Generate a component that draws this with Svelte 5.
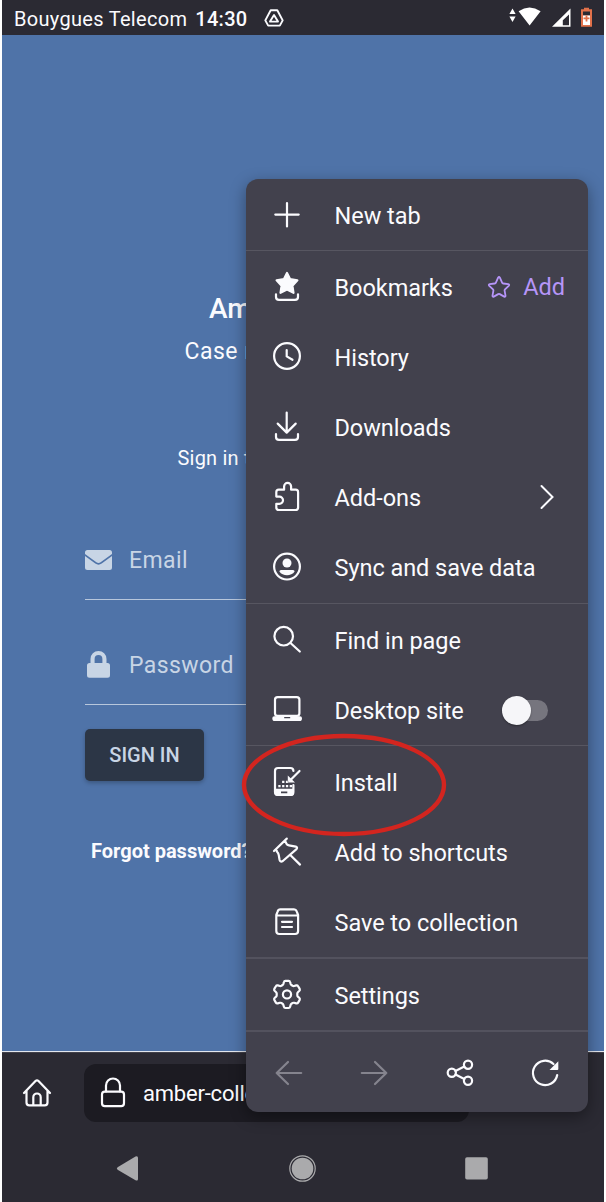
<script>
  const groups = [
    [{ id: 'plus', label: 'New tab' }],
    [
      { id: 'bookmarks', label: 'Bookmarks' },
      { id: 'history', label: 'History' },
      { id: 'downloads', label: 'Downloads' },
      { id: 'addons', label: 'Add-ons' },
      { id: 'sync', label: 'Sync and save data' }
    ],
    [
      { id: 'find', label: 'Find in page' },
      { id: 'desktop', label: 'Desktop site' }
    ],
    [
      { id: 'install', label: 'Install' },
      { id: 'pin', label: 'Add to shortcuts' },
      { id: 'collection', label: 'Save to collection' }
    ],
    [{ id: 'settings', label: 'Settings' }]
  ];
</script>

{#snippet icon(id)}
  <svg class="icon" viewBox="-18 -18 36 36">
    {#if id === 'plus'}
      <path d="M0-12V11.4M-11.7-.4H11.7" />
    {:else if id === 'bookmarks'}
      <path class="solid" d="M0-14L3-7.9L10.4-6.7L5.4-1.3L6.5 5.8L0 2.6L-6.5 5.8L-5.4-1.3L-10.4-6.7L-3-7.9Z" />
      <path d="M-11 7.3V10Q-11 12.9-8 12.9H8Q11 12.9 11 10V7.3" />
    {:else if id === 'history'}
      <circle cx="0" cy="-1" r="12.9" />
      <path d="M-.3-7V-.6L5.5 2.8" />
    {:else if id === 'downloads'}
      <path d="M-.3-14.5V5.4M-9.3-3.4L-.3 5.6L8.7-3.4M-11 7V10Q-11 12.8-8 12.8H8Q11 12.8 11 10V7" />
    {:else if id === 'addons'}
      <path d="M-10.7-1V-4.8Q-10.7-7.3-8.2-7.3H-2.9V-10.6A3.5 3.5 0 0 1 4.1-10.6V-7.3H8.6Q11.1-7.3 11.1-4.8V10.5Q11.1 13 8.6 13H-8.2Q-10.7 13-10.7 10.5V6.8H-7.6A3.4 3.4 0 0 0-7.6-.4H-10.7Z" />
    {:else if id === 'sync'}
      <circle cx="0" cy="-.4" r="12.9" />
      <circle class="fill" cx="0" cy="-4" r="4.5" />
      <path class="fill" d="M-7.6 4.4Q-7.6 2.9-6 2.9H6Q7.6 2.9 7.6 4.4C6 6.9 3 8.2 0 8.2S-6 6.9-7.6 4.4Z" />
    {:else if id === 'find'}
      <circle cx="-3.3" cy="-3.8" r="9.3" />
      <path d="M3.5 3L12.8 11.5" />
    {:else if id === 'desktop'}
      <rect x="-12" y="-12.8" width="24.4" height="18.7" rx="2.6" />
      <path class="fill" fill-rule="evenodd" d="M-14.7 8.2Q-14.7 6.2-12.7 6.2H13Q15 6.2 15 8.2Q15 11.1 12.5 11.1H-12.2Q-14.7 11.1-14.7 8.2ZM-2.8 7V8.3H3.2V7Z" />
    {:else if id === 'install'}
      <path d="M6.4-11Q6.4-14 3.4-14H-9Q-12-14-12-11V10Q-12 13-9 13H3.4Q6.4 13 6.4 10V3" />
      <path class="fill" fill-rule="evenodd" d="M-12.5 6.8H7V11Q7 14 4 14H-9.5Q-12.5 14-12.5 11ZM-6 9.5V11.2H.3V9.5Z" />
      <path class="fill" d="M-8.7 2.9h2.3v2.3h-2.3zM-4.9 2.9h2.3v2.3h-2.3zM-1.1 2.9h2.3v2.3h-2.3zM2.7 2.9h2.3v2.3h-2.3zM-4.9-1.2h2.3v2.3h-2.3zM-1.1-1.2h2.3v2.3h-2.3zM.8-6.5V.6H8Z" />
      <path d="M12.5-11L3.5-2" />
    {:else if id === 'pin'}
      <path d="M-.2-13.4L-13-1M-2.2-11.4L-.6-8.4Q.2-7 1.9-6.7L8.8-5.4Q10.9-4.7 9.5-2.9L-4.2 9Q-6.6 10.5-7.4 8L-8.3 2.9Q-8.6 1.2-9.9-.2L-11-2.8M3.5 3.2L13 12.6" />
    {:else if id === 'collection'}
      <path d="M-10.7-7L-9.3-10.6Q-8.7-12.6-6.7-12.6H7Q9-12.6 9.7-10.6L11.1-7V9Q11.1 12 8.1 12H-7.7Q-10.7 12-10.7 9ZM-10.7-6.5H11.1M-5-.2H5M-5 5H5" />
    {:else if id === 'settings'}
      <g transform="translate(0 -.6)">
        <circle r="4.1" />
        <path d="M-1.6-13.6H1.6Q2.8-13.6 3.1-12.4L3.7-10.3Q4-9.5 4.8-9.1L5.6-8.6Q6.3-8.2 7.1-8.4L9.2-9Q10.5-9.3 11.1-8.2L12.7-5.5Q13.2-4.4 12.4-3.6L10.9-2.2Q10.3-1.6 10.3-.8V.8Q10.3 1.6 10.9 2.2L12.4 3.6Q13.2 4.4 12.7 5.5L11.1 8.2Q10.5 9.3 9.2 9L7.1 8.4Q6.3 8.2 5.6 8.6L4.8 9.1Q4 9.5 3.7 10.3L3.1 12.4Q2.8 13.6 1.6 13.6H-1.6Q-2.8 13.6-3.1 12.4L-3.7 10.3Q-4 9.5-4.8 9.1L-5.6 8.6Q-6.3 8.2-7.1 8.4L-9.2 9Q-10.5 9.3-11.1 8.2L-12.7 5.5Q-13.2 4.4-12.4 3.6L-10.9 2.2Q-10.3 1.6-10.3.8V-.8Q-10.3-1.6-10.9-2.2L-12.4-3.6Q-13.2-4.4-12.7-5.5L-11.1-8.2Q-10.5-9.3-9.2-9L-7.1-8.4Q-6.3-8.2-5.6-8.6L-4.8-9.1Q-4-9.5-3.7-10.3L-3.1-12.4Q-2.8-13.6-1.6-13.6Z" />
      </g>
    {:else if id === 'back'}
      <path d="M12.2 0H-12.3M-1-11L-12.3 0L-1 11" />
    {:else if id === 'forward'}
      <path d="M-12.2 0H12.3M1-11L12.3 0L1 11" />
    {:else if id === 'share'}
      <circle cx="-8.2" cy="-.3" r="4.1" /><circle cx="8" cy="-8.3" r="4.1" /><circle cx="8" cy="7.8" r="4.1" />
      <path d="M-4.5-2L4.3-6.5M-4.5 1.5L4.3 6" />
    {:else if id === 'reload'}
      <path d="M12.2 2A12.2 12.2 0 1 1 8.5-9" />
      <path class="fill" d="M13.3-11.8V-4Q13.3-3 12.3-3H4.5Z" />
    {:else if id === 'home'}
      <path d="M-13 0L-1.5-12Q0-13.4 1.5-12L13 0M-10.5-2.5V9.5Q-10.5 12.3-7.7 12.3H7.7Q10.5 12.3 10.5 9.5V-2.5M-3.7 12V4.2A3.7 3.7 0 0 1 3.7 4.2V12" />
    {:else if id === 'lock'}
      <path d="M-7-1.5V-7.5A7 7 0 0 1 7-7.5V-1.5" />
      <rect x="-11" y="-1.3" width="22" height="14.4" rx="2.8" />
    {/if}
  </svg>
{/snippet}

<div class="phone">
  <header class="status">
    <span>Bouygues Telecom</span>
    <b>14:30</b>
    <svg class="drive" viewBox="0 0 20 18">
      <path d="M6.7 1.2H13.3L18.7 11.4L15.8 16.6H4.2L1.3 11.4ZM10 6L6 12.6H14Z" />
    </svg>
    <svg class="system" viewBox="0 0 84 22">
      <path fill="#fff" d="M3.5 1.5L6.6 7H.4ZM.4 9.4H6.6L3.5 15ZM9.6 4.2Q20.5-3 31.6 4.2L20.6 18.6Z" />
      <path fill="#fff" fill-rule="evenodd" d="M61.5 1.4V19.8H43ZM60 18.2V7.4L53.8 13.3V18.2Z" />
      <path fill="#e2714a" d="M75 .7H80V2.2H83V19.8H72V2.2H75Z" />
      <path fill="#2b2a33" d="M74 4.5H81V8.5H74Z" />
      <path fill="#fff" d="M74 8.5H81V18H74Z" />
      <path stroke="#e2714a" stroke-width="1.8" d="M77.5 8.4V14.4M74.5 11.4H80.5" />
    </svg>
  </header>

  <main>
    <h1>Amber</h1>
    <p class="subtitle">Case m</p>
    <p class="hint">Sign in to</p>
    <form>
      <label>
        <svg viewBox="0 0 27 20">
          <path d="M2.5 0H24.5Q27 0 27 2.5V4L15.6 12.2Q13.5 13.6 11.4 12.2L0 4V2.5Q0 0 2.5 0ZM0 6L10.3 13.6Q13.5 15.8 16.7 13.6L27 6V17.5Q27 20 24.5 20H2.5Q0 20 0 17.5Z" />
        </svg>
        <span>Email</span>
      </label>
      <label>
        <svg viewBox="0 0 27 27">
          <path fill-rule="evenodd" d="M5.5 12V8A8 8 0 0 1 21.5 8V12H22.5Q25 12 25 14.5V24.2Q25 26.7 22.5 26.7H4.5Q2 26.7 2 24.2V14.5Q2 12 4.5 12ZM9.6 12H17.4V8A3.9 3.9 0 0 0 9.6 8Z" />
        </svg>
        <span>Password</span>
      </label>
      <button type="button">SIGN IN</button>
    </form>
    <p class="forgot">Forgot password?</p>
  </main>

  <footer>
    <div class="toolbar">
      {@render icon('home')}
      <div class="address">
        {@render icon('lock')}
        <span>amber-colle</span>
      </div>
    </div>
    <div class="nav">
      <svg viewBox="0 0 27 27"><path d="M3.6 12.2L21.5 1.6Q24 .6 24 3V24Q24 26.4 21.5 25.2L3.6 14.8Q2 13.5 3.6 12.2Z" /></svg>
      <svg viewBox="0 0 27 27"><circle cx="13.5" cy="13.5" r="10.8" /><circle class="ring" cx="13.5" cy="13.5" r="12.7" /></svg>
      <svg viewBox="0 0 27 27"><rect x="2.2" y="2.3" width="22.6" height="22.2" rx="1.8" /></svg>
    </div>
  </footer>

  <nav class="menu">
    {#each groups as group}
      <div class="group">
        {#each group as item}
          <div class="row">
            {@render icon(item.id)}
            <span class="label">{item.label}</span>
            {#if item.id === 'bookmarks'}
              <span class="add">
                <svg viewBox="-12 -12 24 24"><path d="M-.9-9.3Q0-10.8.9-9.3L3.2-4.2Q3.5-3.6 4.2-3.5L9.3-2.8Q10.8-2.4 9.7-1.2L6 2.4Q5.5 2.9 5.6 3.6L6.5 8.6Q6.6 10.2 5.2 9.6L.8 7.1Q0 6.7-.8 7.1L-5.2 9.6Q-6.6 10.2-6.5 8.6L-5.6 3.6Q-5.5 2.9-6 2.4L-9.7-1.2Q-10.8-2.4-9.3-2.8L-4.2-3.5Q-3.5-3.6-3.2-4.2Z" /></svg>
                Add
              </span>
            {:else if item.id === 'addons'}
              <svg class="chevron" viewBox="0 0 16 26"><path d="M2.5 2L13.5 13L2.5 24" /></svg>
            {:else if item.id === 'desktop'}
              <span class="toggle"><i></i></span>
            {/if}
          </div>
        {/each}
      </div>
    {/each}
    <div class="actions">
      <span class="dim">{@render icon('back')}</span>
      <span class="dim">{@render icon('forward')}</span>
      <span>{@render icon('share')}</span>
      <span>{@render icon('reload')}</span>
    </div>
  </nav>

  <svg class="marker" viewBox="0 0 206 104"><ellipse cx="103" cy="52" rx="100" ry="49" /></svg>
</div>

<style>
  :global(body) {
    margin: 0;
    background: #fff;
  }
  .phone {
    position: relative;
    box-sizing: border-box;
    width: 606px;
    height: 1202px;
    padding: 0 2px;
    display: flex;
    flex-direction: column;
    overflow: hidden;
    font-family: Roboto, sans-serif;
    color: #fbfbfe;
  }
  h1, p {
    margin: 0;
    white-space: nowrap;
  }
  .status {
    height: 35px;
    padding: 0 11px 0 12px;
    display: flex;
    align-items: center;
    background: #2b2a33;
    font-size: 20px;
    letter-spacing: 0.3px;
    line-height: 36px;
  }
  .status span,
  .status b {
    padding-top: 2px;
  }
  .status b {
    margin-left: 8px;
    font-weight: 500;
  }
  .drive {
    width: 20px;
    height: 18px;
    margin-left: 16px;
    fill: none;
    stroke: #fbfbfe;
    stroke-width: 1.9;
    stroke-linejoin: round;
  }
  .system {
    width: 84px;
    height: 22px;
    margin: 0 0 0 auto;
  }
  main {
    height: 1017px;
    box-sizing: border-box;
    padding: 256px 0 0 83px;
    background: #4f73a8;
    border-bottom: 1px solid #e3e7ee;
  }
  h1 {
    margin-left: 124px;
    font-size: 28px;
    font-weight: 500;
    line-height: 36px;
  }
  .subtitle {
    margin: 10px 0 0 99.5px;
    font-size: 23px;
    line-height: 30px;
    letter-spacing: 0.5px;
  }
  .hint {
    margin: 78px 0 0 92.5px;
    font-size: 20px;
    line-height: 26px;
    letter-spacing: 0.2px;
  }
  form {
    margin-top: 49px;
    display: flex;
    flex-direction: column;
    align-items: flex-start;
    gap: 25px;
  }
  label {
    box-sizing: border-box;
    width: 434px;
    height: 80px;
    display: flex;
    align-items: center;
    gap: 17px;
    border-bottom: 1px solid #b8c7dc;
    color: #c8d5e5;
    font-size: 23px;
    letter-spacing: 0.4px;
  }
  label span {
    padding-top: 1px;
  }
  label svg {
    width: 27px;
    fill: #c8d5e5;
  }
  button {
    width: 119px;
    height: 52px;
    margin-top: -1px;
    padding: 0;
    border: 0;
    border-radius: 5px;
    background: #2c3646;
    box-shadow: 0 2px 4px rgba(0, 0, 0, 0.25);
    color: #c8d5e5;
    font: 500 20px Roboto, sans-serif;
  }
  .forgot {
    margin: 57px 0 0 6px;
    font-size: 20px;
    line-height: 26px;
    font-weight: 700;
  }
  footer {
    flex: 1;
    background: #2b2a33;
    border-top: 1px solid #42414a;
  }
  .toolbar {
    height: 80px;
    padding: 0 0 0 17px;
    display: flex;
    align-items: center;
  }
  .address {
    width: 385px;
    height: 58px;
    box-sizing: border-box;
    margin-left: 29px;
    padding-left: 11px;
    display: flex;
    align-items: center;
    gap: 12px;
    border-radius: 12px;
    background: #1c1b22;
    font-size: 22px;
    letter-spacing: -0.2px;
  }
  .nav {
    padding: 22px 114px 0 112px;
    display: flex;
    justify-content: space-between;
  }
  .nav svg {
    width: 27px;
    height: 27px;
    fill: #aaaaac;
  }
  .nav .ring {
    fill: none;
    stroke: #aaaaac;
    stroke-width: 1.2;
  }
  .icon {
    flex: none;
    width: 36px;
    height: 36px;
    fill: none;
    stroke: currentColor;
    stroke-width: 2.2;
    stroke-linecap: round;
    stroke-linejoin: round;
  }
  .icon .solid {
    fill: currentColor;
  }
  .icon .fill {
    fill: currentColor;
    stroke: none;
  }
  .menu {
    position: absolute;
    left: 246px;
    top: 179px;
    width: 342px;
    height: 933px;
    border-radius: 12px;
    background: #42414d;
    box-shadow: 0 5px 16px rgba(0, 0, 0, 0.38);
  }
  .group {
    padding-top: 1px;
    border-bottom: 1px solid #575661;
  }
  .group:nth-child(2) {
    padding-bottom: 1px;
  }
  .group:nth-child(4),
  .group:nth-child(5) {
    border-bottom: 2px solid #53525e;
  }
  .row {
    height: 70px;
    padding-left: 23px;
    display: flex;
    align-items: center;
    font-size: 23.5px;
    letter-spacing: -0.05px;
    white-space: nowrap;
  }
  .label {
    margin-left: 29.5px;
    padding-top: 1px;
  }
  .add {
    display: flex;
    align-items: center;
    gap: 12px;
    margin: 0 23px 0 auto;
    color: #b695f8;
  }
  .add svg {
    width: 24px;
    height: 24px;
    fill: none;
    stroke: currentColor;
    stroke-width: 1.8;
    stroke-linejoin: round;
  }
  .chevron {
    width: 16px;
    height: 26px;
    margin: 0 33px 0 auto;
    fill: none;
    stroke: #fbfbfe;
    stroke-width: 2;
    stroke-linecap: round;
  }
  .toggle {
    width: 46px;
    height: 21px;
    margin: 0 40px 0 auto;
    display: flex;
    align-items: center;
    border-radius: 11px;
    background: #76757e;
  }
  .toggle i {
    flex: none;
    width: 29px;
    height: 29px;
    border-radius: 50%;
    background: #f6f6f9;
    box-shadow: 0 1px 2px rgba(0, 0, 0, 0.35);
  }
  .actions {
    height: 82px;
    display: grid;
    grid-template-columns: repeat(4, 1fr);
    place-items: center;
  }
  .actions span {
    display: flex;
  }
  .dim {
    color: #85848e;
  }
  .marker {
    position: absolute;
    left: 241px;
    top: 733px;
    width: 206px;
    height: 104px;
    fill: none;
    stroke: #d3251f;
    stroke-width: 4.4;
  }
</style>
